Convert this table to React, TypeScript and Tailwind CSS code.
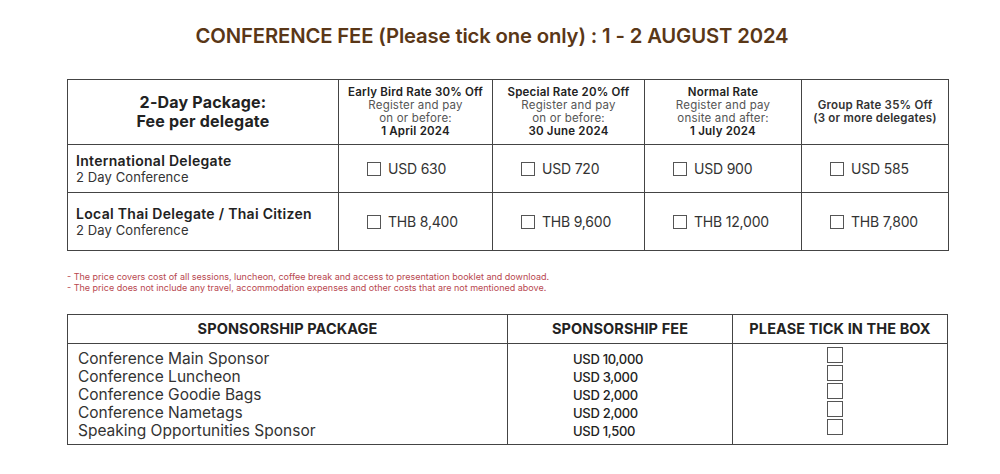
import React from "react";

const Box = ({ size = 13 }: { size?: number }) => (
  <span
    className="inline-block border border-[#555] bg-white shrink-0"
    style={{ width: size, height: size }}
  />
);

const heads = [
  { t: "Early Bird Rate 30% Off", l: ["Register and pay", "on or before:"], d: "1 April 2024" },
  { t: "Special Rate 20% Off", l: ["Register and pay", "on or before:"], d: "30 June 2024" },
  { t: "Normal Rate", l: ["Register and pay", "onsite and after:"], d: "1 July 2024" },
];

const rows = [
  { name: "International Delegate", sub: "2 Day Conference", p: ["USD 630", "USD 720", "USD 900", "USD 585"], h: "h-[48px]" },
  { name: "Local Thai Delegate / Thai Citizen", sub: "2 Day Conference", p: ["THB 8,400", "THB 9,600", "THB 12,000", "THB 7,800"], h: "h-[58px]" },
];

const sponsors = [
  ["Conference Main Sponsor", "USD 10,000"],
  ["Conference Luncheon", "USD 3,000"],
  ["Conference Goodie Bags", "USD 2,000"],
  ["Conference Nametags", "USD 2,000"],
  ["Speaking Opportunities Sponsor", "USD 1,500"],
];

export default function App() {
  return (
    <div className="w-[1000px] h-[474px] bg-white overflow-hidden text-[#222]" style={{ fontFamily: "Inter, 'Noto Sans', sans-serif" }}>
      <div className="pt-[23px] text-center w-[984px]">
        <h1 className="text-[20.3px] font-semibold text-[#5a3717] tracking-[-0.15px] leading-[26px]">
          CONFERENCE FEE (Please tick one only) : 1 - 2 AUGUST 2024
        </h1>
      </div>

      <div className="ml-[67px] mt-[30px] w-[881px]">
        <table className="w-full border-collapse table-fixed">
          <colgroup>
            <col style={{ width: 271 }} />
            <col style={{ width: 154 }} />
            <col style={{ width: 152 }} />
            <col style={{ width: 157 }} />
            <col style={{ width: 147 }} />
          </colgroup>
          <thead>
            <tr className="h-[65px]">
              <th className="border border-[#444] text-center align-middle">
                <div className="text-[16px] font-bold leading-[19px] tracking-[0.2px]">2-Day Package:</div>
                <div className="text-[16px] font-bold leading-[19px] tracking-[0.2px]">Fee per delegate</div>
              </th>
              {heads.map((h) => (
                <th key={h.t} className="border border-[#444] text-center align-middle px-0">
                  <div className="text-[11.5px] font-semibold leading-[13px] tracking-[0.2px]">{h.t}</div>
                  {h.l.map((x) => (
                    <div key={x} className="text-[11.5px] font-normal leading-[13px] tracking-[0.2px] text-[#555]">{x}</div>
                  ))}
                  <div className="text-[11.5px] font-semibold leading-[13px] tracking-[0.2px]">{h.d}</div>
                </th>
              ))}
              <th className="border border-[#444] text-center align-middle px-0">
                <div className="text-[11.5px] font-semibold leading-[13px] tracking-[0.2px] text-[#333]">Group Rate 35% Off</div>
                <div className="text-[11.5px] font-semibold leading-[13px] tracking-[0.2px] text-[#333]">(3 or more delegates)</div>
              </th>
            </tr>
          </thead>
          <tbody>
            {rows.map((r) => (
              <tr key={r.name} className={r.h}>
                <td className="border border-[#444] pl-[8px] align-middle">
                  <div className="text-[14px] font-semibold leading-[17px] tracking-[0.3px]">{r.name}</div>
                  <div className="text-[13px] leading-[16px] tracking-[0.1px] text-[#333]">{r.sub}</div>
                </td>
                {r.p.map((p) => (
                  <td key={p} className="border border-[#444] align-middle pl-[28px]">
                    <div className="flex items-center gap-[7px] text-[14px] tracking-[-0.2px] text-[#333]">
                      <Box size={14} />
                      <span>{p}</span>
                    </div>
                  </td>
                ))}
              </tr>
            ))}
          </tbody>
        </table>

        <div className="mt-[20px] text-[9px] leading-[11px] text-[#b8474f]">
          <div>- The price covers cost of all sessions, luncheon, coffee break and access to presentation booklet and download.</div>
          <div>- The price does not include any travel, accommodation expenses and other costs that are not mentioned above.</div>
        </div>

        <table className="w-[880px] mt-[21px] border-collapse table-fixed">
          <colgroup>
            <col style={{ width: 440 }} />
            <col style={{ width: 225 }} />
            <col style={{ width: 215 }} />
          </colgroup>
          <thead>
            <tr className="h-[29px]">
              <th className="border border-[#444] text-[14.5px] font-bold tracking-[0.1px]">SPONSORSHIP PACKAGE</th>
              <th className="border border-[#444] text-[14.5px] font-bold tracking-[0.1px]">SPONSORSHIP FEE</th>
              <th className="border border-[#444] text-[14.5px] font-bold tracking-[0.1px]">PLEASE TICK IN THE BOX</th>
            </tr>
          </thead>
          <tbody>
            <tr>
              <td className="border border-[#444] pl-[10px] pt-[6px] pb-[4px] align-top">
                {sponsors.map(([n]) => (
                  <div key={n} className="text-[15.5px] leading-[18px] text-[#333]">{n}</div>
                ))}
              </td>
              <td className="border border-[#444] pl-[65px] pt-[6px] pb-[4px] align-top">
                {sponsors.map(([n, f]) => (
                  <div key={n} className="text-[13px] font-medium leading-[18px] tracking-[-0.3px] text-[#222]">{f}</div>
                ))}
              </td>
              <td className="border border-[#444] align-top pt-[3px]">
                <div className="flex flex-col items-center gap-[2px] pr-[10px]">
                  {sponsors.map(([n]) => (
                    <Box key={n} size={16} />
                  ))}
                </div>
              </td>
            </tr>
          </tbody>
        </table>
      </div>
    </div>
  );
}
